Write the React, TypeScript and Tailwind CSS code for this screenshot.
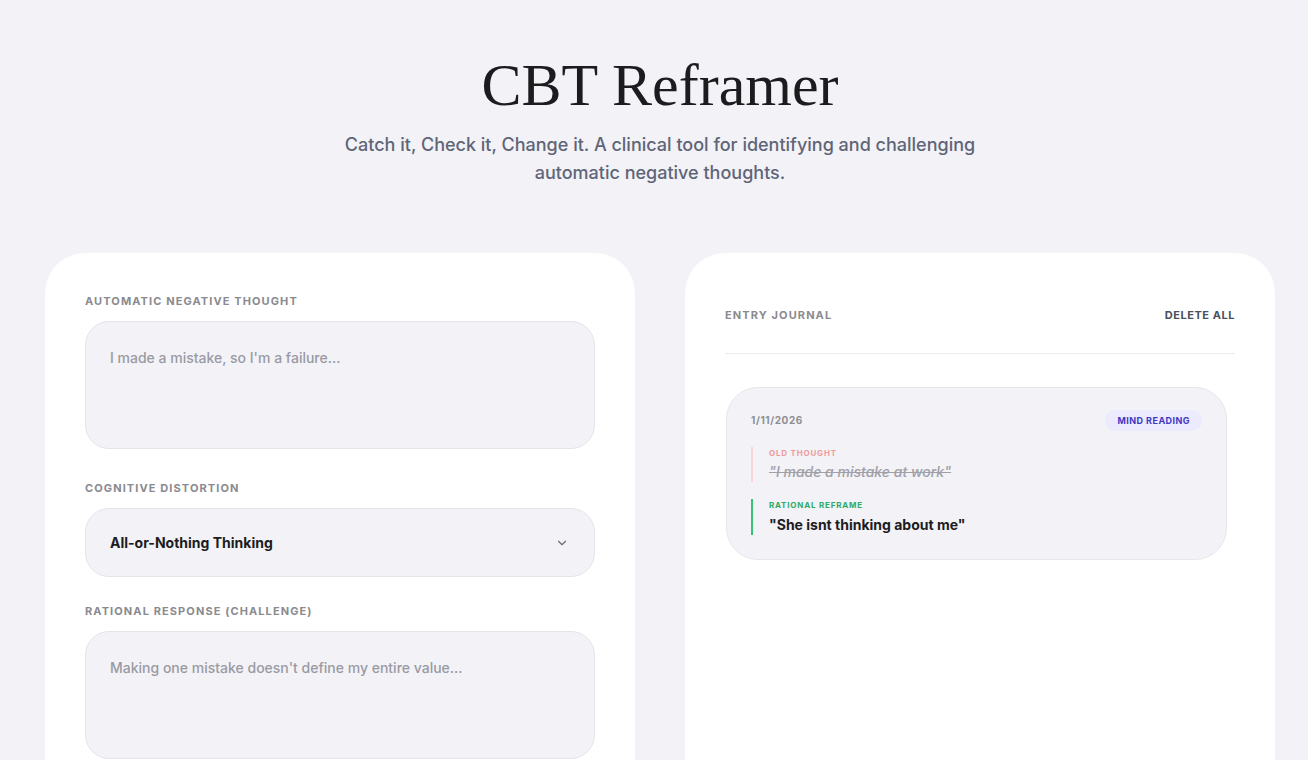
import { ChevronDown } from "lucide-react";

const labelCls =
  "block text-[11px] leading-4 font-bold uppercase tracking-[0.1em] text-[#8a8a8f]";

function Field({ label, placeholder }: { label: string; placeholder: string }) {
  return (
    <div>
      <label className={labelCls}>{label}</label>
      <textarea
        placeholder={placeholder}
        className="mt-3 block h-[128px] w-full resize-none rounded-[24px] border border-[#e4e4ea] bg-[#f2f2f7] px-6 py-[24px] text-[14px] font-medium leading-6 text-[#1c1c1e] outline-none placeholder:text-[#9a9aa3]"
      />
    </div>
  );
}

function EntryCard() {
  return (
    <div className="rounded-[32px] border border-[#e6e6ec] bg-[#f2f2f7] p-6 pt-[22px]">
      <div className="flex items-center justify-between">
        <span className="text-[10px] font-bold tracking-[0.06em] text-[#8e8e93]">1/11/2026</span>
        <span className="rounded-full bg-[#ebebfd] px-3 py-[5px] text-[9px] font-bold leading-[11px] tracking-[0.05em] text-[#4038c4]">
          MIND READING
        </span>
      </div>
      <div className="mt-4 border-l-2 border-[#fbd5d5] pl-4">
        <div className="text-[8px] font-bold leading-3 tracking-[0.1em] text-[#f09a9a]">OLD THOUGHT</div>
        <div className="mt-[3px] text-[14px] font-medium italic leading-5 text-[#a0a0a8] line-through">
          "I made a mistake at work"
        </div>
      </div>
      <div className="mt-[17px] border-l-2 border-[#34c474] pl-4">
        <div className="text-[8px] font-bold leading-3 tracking-[0.1em] text-[#2faa62]">RATIONAL REFRAME</div>
        <div className="mt-[4px] text-[14px] font-bold leading-5 text-[#1c1c1e]">
          "She isnt thinking about me"
        </div>
      </div>
    </div>
  );
}

export default function App() {
  return (
    <div className="min-h-screen bg-[#f2f2f7] pb-16 pl-3 font-['Inter',sans-serif]">
      <header className="flex flex-col items-center pt-[52px] text-center">
        <h1 className="font-['Liberation_Serif',serif] text-[60px] leading-[66px] text-[#1c1c1e]">
          CBT Reframer
        </h1>
        <p className="mt-[13px] max-w-[660px] text-[18px] font-medium leading-7 text-[#5f6577]">
          Catch it, Check it, Change it. A clinical tool for identifying and challenging automatic negative
          thoughts.
        </p>
      </header>

      <main className="mx-auto mt-[66px] grid w-[1230px] grid-cols-2 gap-[50px]">
        <section className="rounded-[40px] bg-white px-10 pb-10 pt-10 shadow-[0_1px_3px_rgba(0,0,0,0.02)]">
          <Field label="Automatic Negative Thought" placeholder="I made a mistake, so I'm a failure..." />

          <div className="mt-[31px]">
            <label className={labelCls}>Cognitive Distortion</label>
            <button className="mt-3 flex h-[69px] w-full items-center justify-between rounded-[24px] border border-[#e4e4ea] bg-[#f2f2f7] pl-6 pr-[25px] text-left">
              <span className="text-[14px] font-bold text-[#1c1c1e]">All-or-Nothing Thinking</span>
              <ChevronDown className="size-[14px] text-[#6b6b73]" strokeWidth={2} />
            </button>
          </div>

          <div className="mt-[26px]">
            <Field
              label="Rational Response (Challenge)"
              placeholder="Making one mistake doesn't define my entire value..."
            />
          </div>
        </section>

        <section className="rounded-[40px] bg-white px-10 pb-10 pt-10 shadow-[0_1px_3px_rgba(0,0,0,0.02)]">
          <div className="border-b border-[#ececf0] pb-4">
            <div className="flex h-11 items-center justify-between">
              <span className={labelCls}>Entry Journal</span>
              <button className="text-[11px] font-bold uppercase tracking-[0.05em] text-[#4a5060]">
                Delete All
              </button>
            </div>
          </div>
          <div className="mt-[33px] pl-px pr-2">
            <EntryCard />
          </div>
        </section>
      </main>
    </div>
  );
}
